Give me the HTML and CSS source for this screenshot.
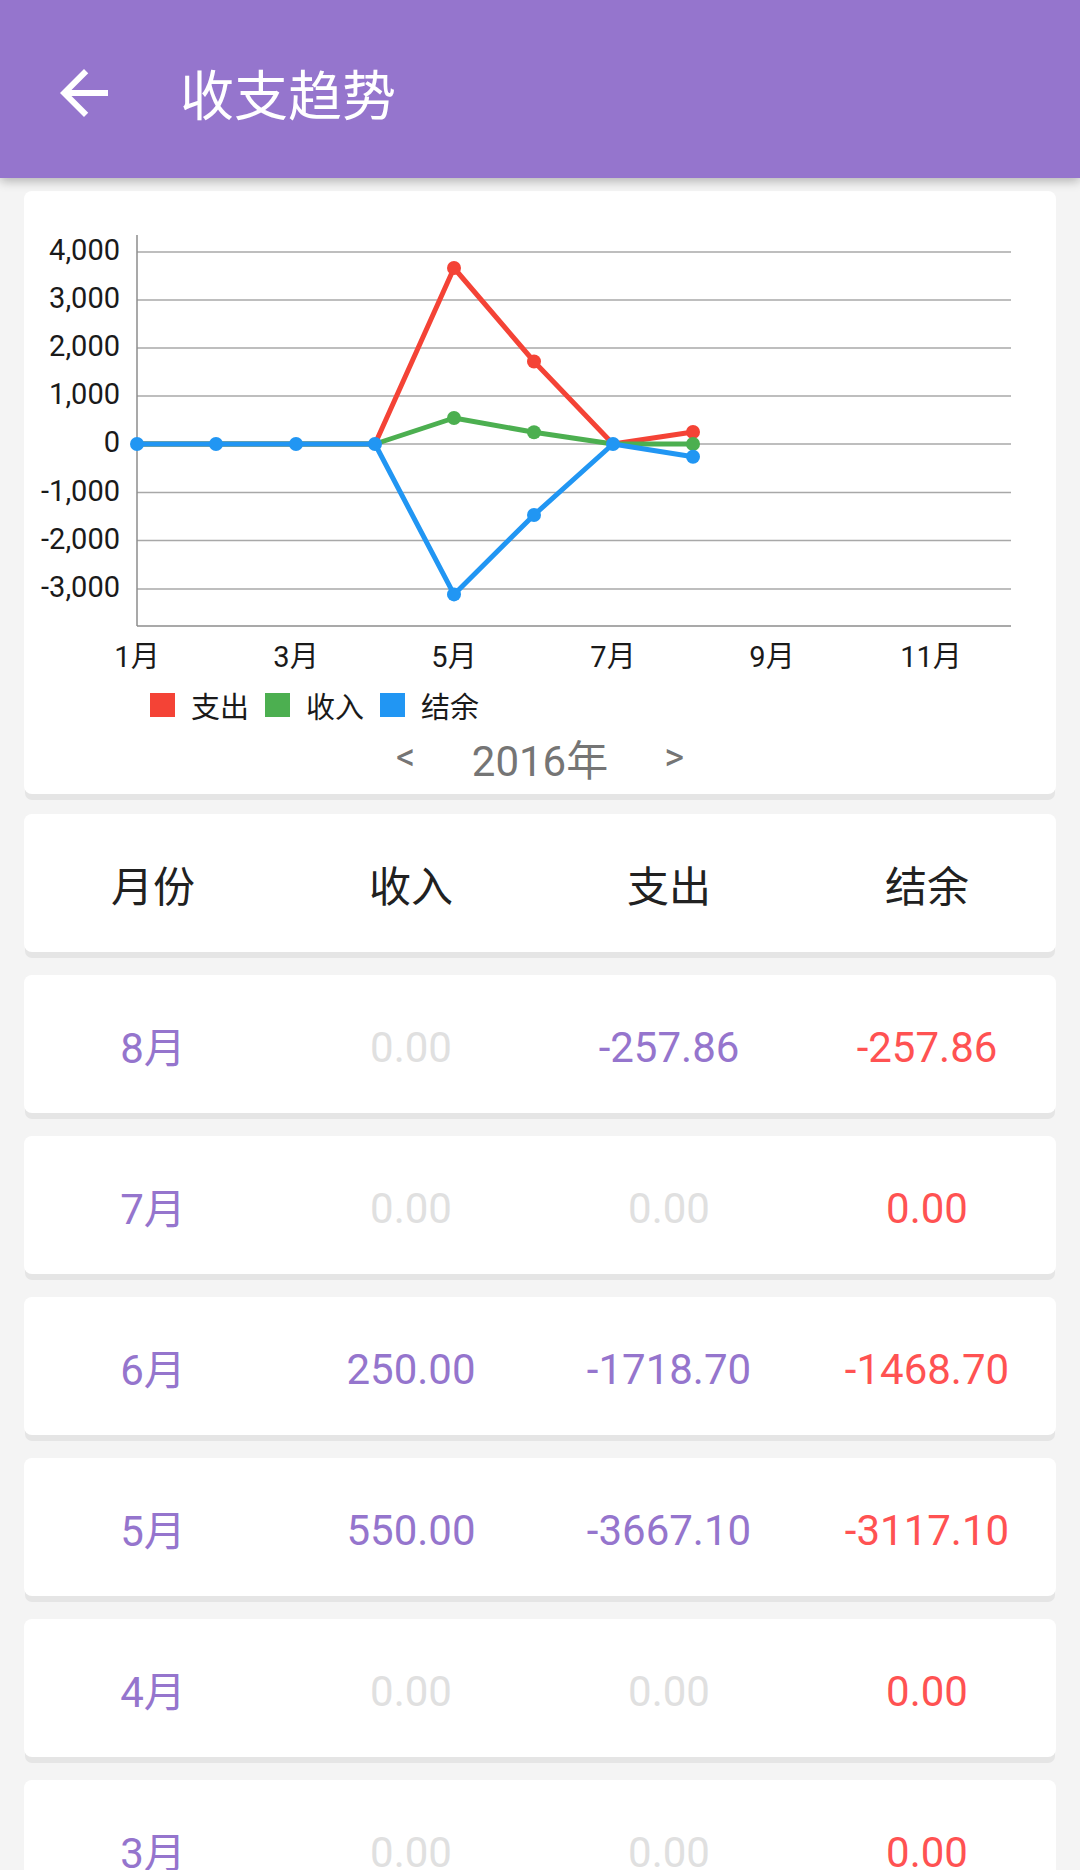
FILE: index.html
```html
<!DOCTYPE html>
<html lang="zh-CN">
<head>
    <meta charset="UTF-8">
    <meta name="viewport" content="width=device-width, initial-scale=1.0">
    <title>收支趋势</title>

    <link rel="stylesheet" href="styles.css">
</head>

<body>
    <!-- Toolbar -->
    <header class="toolbar">
        <svg class="back-icon" viewBox="0 0 24 24">
            <path d="M20 11H7.83l5.59-5.59L12 4l-8 8 8 8 1.41-1.41L7.83 13H20v-2z"/>
        </svg>
        <h1 class="title">收支趋势</h1>
    </header>

    <div class="content">
        <!-- Trend chart -->
        <section class="card chart-card">
            <svg class="chart" viewBox="0 0 1031 490" width="1031" height="490">
                <g class="grid">
                    <line x1="113" y1="61" x2="987" y2="61"/>
                    <line x1="113" y1="109" x2="987" y2="109"/>
                    <line x1="113" y1="157" x2="987" y2="157"/>
                    <line x1="113" y1="205" x2="987" y2="205"/>
                    <line x1="113" y1="253" x2="987" y2="253"/>
                    <line x1="113" y1="301.5" x2="987" y2="301.5"/>
                    <line x1="113" y1="349.5" x2="987" y2="349.5"/>
                    <line x1="113" y1="398" x2="987" y2="398"/>
                </g>
                <g class="axis">
                    <line x1="113" y1="44" x2="113" y2="435"/>
                    <line x1="113" y1="435" x2="987" y2="435"/>
                </g>
                <g class="y-labels">
                    <text x="96" y="69">4,000</text>
                    <text x="96" y="117">3,000</text>
                    <text x="96" y="165">2,000</text>
                    <text x="96" y="213">1,000</text>
                    <text x="96" y="261">0</text>
                    <text x="96" y="309.5">-1,000</text>
                    <text x="96" y="357.5">-2,000</text>
                    <text x="96" y="406">-3,000</text>
                </g>
                <g class="x-labels">
                    <text x="113" y="476">1月</text>
                    <text x="272" y="476">3月</text>
                    <text x="430" y="476">5月</text>
                    <text x="589" y="476">7月</text>
                    <text x="748" y="476">9月</text>
                    <text x="907" y="476">11月</text>
                </g>

                <!-- 支出 -->
                <g class="series red">
                    <polyline points="113,253 192,253 272,253 351,253 430,77 510,170.5 589,253 669,241"/>
                    <circle cx="430" cy="77" r="7"/>
                    <circle cx="510" cy="170.5" r="7"/>
                    <circle cx="669" cy="241" r="7"/>
                </g>
                <!-- 收入 -->
                <g class="series green">
                    <polyline points="113,253 192,253 272,253 351,253 430,227 510,241.3 589,253 669,253"/>
                    <circle cx="430" cy="227" r="7"/>
                    <circle cx="510" cy="241.3" r="7"/>
                    <circle cx="669" cy="253" r="7"/>
                </g>
                <!-- 结余 -->
                <g class="series blue">
                    <polyline points="113,253 192,253 272,253 351,253 430,403.4 510,324 589,253 669,265.7"/>
                    <circle cx="113" cy="253" r="7"/>
                    <circle cx="192" cy="253" r="7"/>
                    <circle cx="272" cy="253" r="7"/>
                    <circle cx="351" cy="253" r="7"/>
                    <circle cx="430" cy="403.4" r="7"/>
                    <circle cx="510" cy="324" r="7"/>
                    <circle cx="589" cy="253" r="7"/>
                    <circle cx="669" cy="265.7" r="7"/>
                </g>
            </svg>

            <div class="legend">
                <span class="swatch swatch-red"></span><span class="legend-label">支出</span>
                <span class="swatch swatch-green"></span><span class="legend-label">收入</span>
                <span class="swatch swatch-blue"></span><span class="legend-label">结余</span>
            </div>

            <div class="year-nav">
                <span class="chevron">&lt;</span>
                <span class="year">2016年</span>
                <span class="chevron">&gt;</span>
            </div>
        </section>

        <!-- Table header -->
        <div class="card row row-head">
            <span>月份</span>
            <span>收入</span>
            <span>支出</span>
            <span>结余</span>
        </div>

        <!-- Monthly rows -->
        <div class="card row">
            <span class="month">8月</span>
            <span class="num zero">0.00</span>
            <span class="num value">-257.86</span>
            <span class="num balance">-257.86</span>
        </div>
        <div class="card row">
            <span class="month">7月</span>
            <span class="num zero">0.00</span>
            <span class="num zero">0.00</span>
            <span class="num balance">0.00</span>
        </div>
        <div class="card row">
            <span class="month">6月</span>
            <span class="num value">250.00</span>
            <span class="num value">-1718.70</span>
            <span class="num balance">-1468.70</span>
        </div>
        <div class="card row">
            <span class="month">5月</span>
            <span class="num value">550.00</span>
            <span class="num value">-3667.10</span>
            <span class="num balance">-3117.10</span>
        </div>
        <div class="card row">
            <span class="month">4月</span>
            <span class="num zero">0.00</span>
            <span class="num zero">0.00</span>
            <span class="num balance">0.00</span>
        </div>
        <div class="card row">
            <span class="month">3月</span>
            <span class="num zero">0.00</span>
            <span class="num zero">0.00</span>
            <span class="num balance">0.00</span>
        </div>
    </div>
</body>
</html>
```

FILE: styles.css
```css
/* General styling */
body, html {
    margin: 0;
    padding: 0;
    background-color: #f4f4f4;
    font-family: Roboto, "Noto Sans CJK SC", sans-serif;
    color: #212121;
}

/* Toolbar */
.toolbar {
    position: relative;
    z-index: 1;
    height: 178px;
    display: flex;
    align-items: center;
    padding-top: 8px;
    box-sizing: border-box;
    background-color: #9575cd;
    box-shadow: 0 3px 10px rgba(0, 0, 0, 0.28);
}

.back-icon {
    width: 72px;
    height: 72px;
    margin-left: 48px;
    fill: white;
}

.title {
    margin: 0 0 0 60px;
    font-family: "Noto Sans CJK SC", sans-serif;
    font-size: 54px;
    font-weight: normal;
    line-height: 1;
    color: white;
}

.content {
    padding: 13px 24px 0;
}

/* Cards */
.card {
    background-color: white;
    border-radius: 8px;
    box-shadow: 0 7px 0 -1px #e5e5e5;
    margin-bottom: 23px;
}

.chart-card {
    height: 603px;
    margin-bottom: 20px;
}

.chart {
    display: block;
}

.grid line {
    stroke: #a8a8a8;
    stroke-width: 1.5;
}

.axis line {
    stroke: #8c8c8c;
    stroke-width: 1.5;
}

.y-labels text {
    font-family: Roboto, sans-serif;
    font-size: 29px;
    fill: #1a1a1a;
    text-anchor: end;
}

.x-labels text {
    font-family: Roboto, "Noto Sans CJK SC", sans-serif;
    font-size: 29px;
    fill: #1a1a1a;
    text-anchor: middle;
}

.series polyline {
    fill: none;
    stroke-width: 5;
    stroke-linejoin: round;
}

.red polyline { stroke: #f44336; }
.red circle { fill: #f44336; }
.green polyline { stroke: #4caf50; }
.green circle { fill: #4caf50; }
.blue polyline { stroke: #2196f3; }
.blue circle { fill: #2196f3; }

/* Legend */
.legend {
    display: flex;
    align-items: center;
    height: 30px;
    margin-top: 9px;
    padding-left: 126px;
    font-size: 29px;
    color: #1a1a1a;
}

.swatch {
    width: 25px;
    height: 24px;
    margin-right: 16px;
}

.legend-label {
    margin-right: 16px;
    font-family: "Noto Sans CJK SC", sans-serif;
}

.swatch-red { background-color: #f44336; }
.swatch-green { background-color: #4caf50; }
.swatch-blue { background-color: #2196f3; }

/* Year switcher */
.year-nav {
    display: flex;
    justify-content: center;
    align-items: center;
    gap: 46px;
    height: 50px;
    margin-top: 12px;
    font-size: 42px;
    color: #757575;
}

.chevron {
    width: 40px;
    text-align: center;
    font-size: 38px;
}

/* Table rows */
.row {
    height: 138px;
    display: flex;
    align-items: center;
    font-size: 42px;
}

.row span {
    flex: 1;
    text-align: center;
}

.row .num {
    padding-top: 7px;
}

.row-head {
    color: #212121;
}

.month, .value {
    color: #9575cd;
}

.zero {
    color: #e0e0e0;
}

.balance {
    color: #ff5252;
}
```
